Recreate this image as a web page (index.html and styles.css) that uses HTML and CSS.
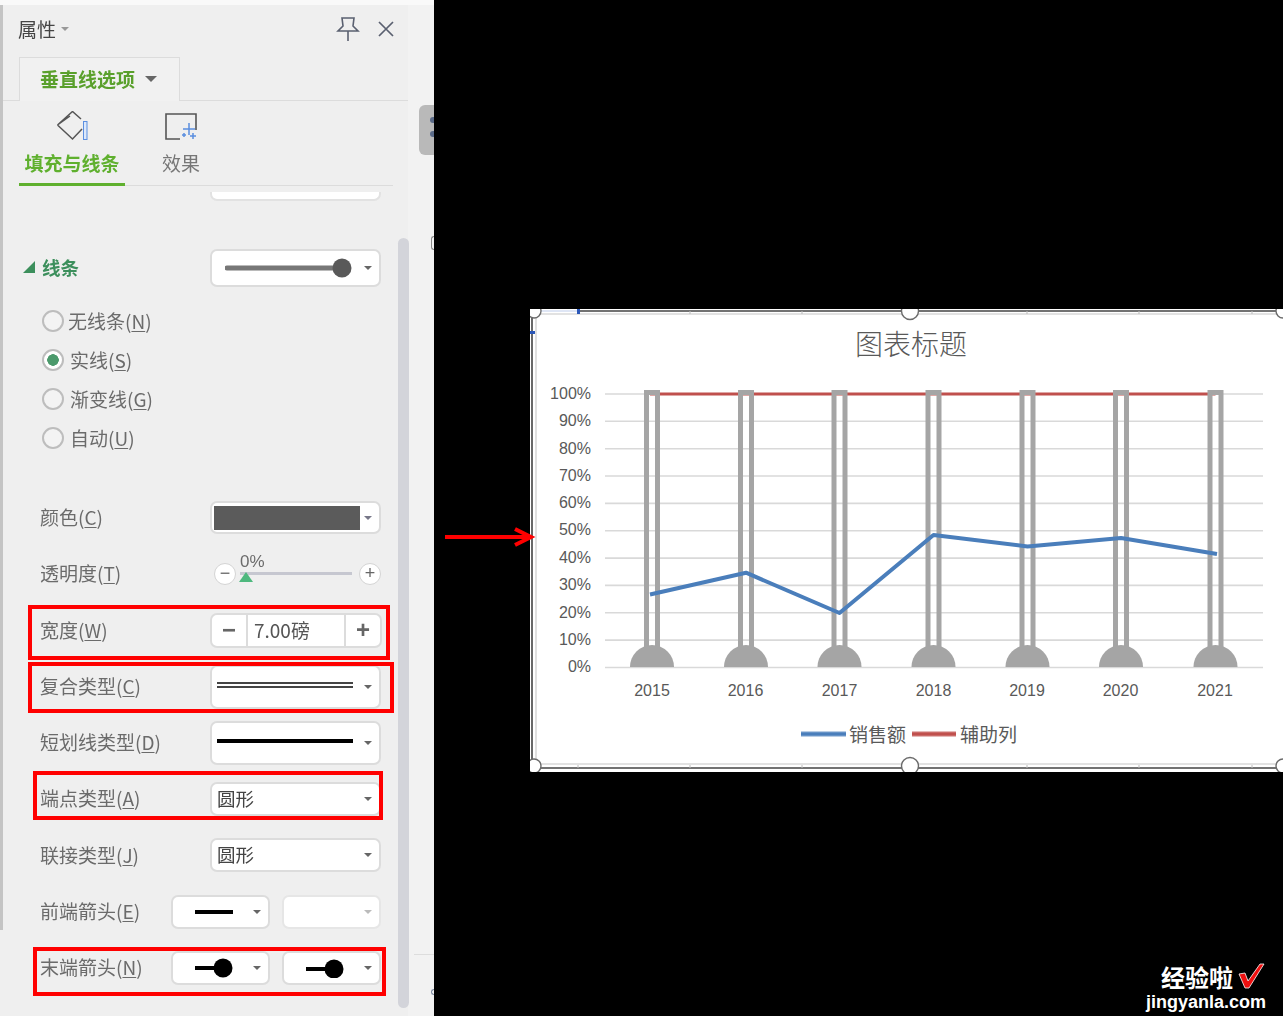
FILE: index.html
```html
<!doctype html>
<html lang="zh-CN">
<head>
  <title>属性 - 垂直线选项</title>
  <meta charset="utf-8">
  <link rel="stylesheet" href="styles.css">
</head>
<body>

<aside class="panel">
  <div class="panel-inner">
    <div class="topband"></div>

    <div class="panel-head">
      <span class="panel-title">属性</span>
      <i class="caret caret-title"></i>
      <svg class="pin" width="24" height="26" viewBox="0 0 24 26"><path d="M6 2h12l-1 8 5 5H2l5-5zM12 15v10" fill="none" stroke="#5a6070" stroke-width="1.6"/></svg>
      <svg class="close" width="18" height="18" viewBox="0 0 18 18"><path d="M2 2l14 14M16 2L2 16" fill="none" stroke="#5a6070" stroke-width="1.7"/></svg>
    </div>

    <div class="tabbar">
      <div class="tab">垂直线选项<i class="caret caret-tab"></i></div>
    </div>

    <div class="subtabs">
      <div class="subtab active">
        <svg width="32" height="32" viewBox="0 0 32 32"><path d="M1.5 14L16.5.5 25 8M1.5 14l15 14 9.500-10M1.500 14L14 5" fill="none" stroke="#555" stroke-width="1.5"/><rect x="27.500" y="10.500" width="3.500" height="18" fill="#dce8fa" stroke="#5b8fe0"/></svg>
        <span>填充与线条</span>
      </div>
      <div class="subtab">
        <svg width="34" height="30" viewBox="0 0 34 30"><path d="M16 27H2V2h30v16" fill="none" stroke="#555" stroke-width="1.6"/><path d="M25 11v12M19 17h12M29 21v6M26 24h6M20 21v4M18 23h4" fill="none" stroke="#5b8fe0" stroke-width="1.5"/></svg>
        <span>效果</span>
      </div>
    </div>

    <div class="fragment"></div>

    <div class="row row-section">
      <h3 class="section-title"><i class="tri"></i>线条</h3>
      <div class="ctrl">
        <svg class="preview" width="130" height="20" viewBox="0 0 130 20"><path d="M2 10h112" stroke="#777" stroke-width="5" stroke-linecap="round"/><circle cx="117" cy="10" r="9.500" fill="#595959"/></svg>
        <i class="caret"></i>
      </div>
    </div>

    <ul class="radios">
      <li><i class="radio"></i><span class="radio-first">无线条(<u>N</u>)</span></li>
      <li><i class="radio on"></i><span>实线(<u>S</u>)</span></li>
      <li><i class="radio"></i><span>渐变线(<u>G</u>)</span></li>
      <li><i class="radio"></i><span>自动(<u>U</u>)</span></li>
    </ul>

    <div class="row">
      <label>颜色(<u>C</u>)</label>
      <div class="ctrl ctrl-color"><div class="swatch"></div><i class="caret"></i></div>
    </div>

    <div class="row">
      <label>透明度(<u>T</u>)</label>
      <div class="slider">
        <i class="round">−</i>
        <div class="track"><span class="pct">0%</span><i class="thumb"></i></div>
        <i class="round">+</i>
      </div>
    </div>

    <div class="row row-tall">
      <label>宽度(<u>W</u>)</label>
      <div class="ctrl spinner">
        <b class="step">−</b>
        <span class="value">7.00磅</span>
        <b class="step">+</b>
      </div>
    </div>

    <div class="row">
      <label>复合类型(<u>C</u>)</label>
      <div class="ctrl ctrl-big">
        <div class="compound"></div>
        <i class="caret"></i>
      </div>
    </div>

    <div class="row">
      <label>短划线类型(<u>D</u>)</label>
      <div class="ctrl ctrl-big">
        <div class="dash"></div>
        <i class="caret"></i>
      </div>
    </div>

    <div class="row">
      <label>端点类型(<u>A</u>)</label>
      <div class="ctrl"><span class="value-text">圆形</span><i class="caret"></i></div>
    </div>

    <div class="row row-tall">
      <label>联接类型(<u>J</u>)</label>
      <div class="ctrl"><span class="value-text">圆形</span><i class="caret"></i></div>
    </div>

    <div class="row">
      <label class="label-short">前端箭头(<u>E</u>)</label>
      <div class="ctrl ctrl-half">
        <svg width="40" height="20" viewBox="0 0 40 20"><path d="M0 10h38" stroke="#000" stroke-width="4"/></svg>
        <i class="caret"></i>
      </div>
      <div class="ctrl ctrl-half ctrl-off"><i class="caret"></i></div>
    </div>

    <div class="row">
      <label class="label-short">末端箭头(<u>N</u>)</label>
      <div class="ctrl ctrl-half">
        <svg width="40" height="20" viewBox="0 0 40 20"><path d="M0 10h24" stroke="#000" stroke-width="4"/><circle cx="28" cy="10" r="9.500"/></svg>
        <i class="caret"></i>
      </div>
      <div class="ctrl ctrl-half">
        <svg width="40" height="20" viewBox="0 0 40 20"><path d="M0 11h24" stroke="#000" stroke-width="4"/><circle cx="28" cy="11" r="9.500"/></svg>
        <i class="caret"></i>
      </div>
    </div>

    <div class="scrollbar"></div>
    <div class="gutter-tab"><i></i><i></i></div>
    <div class="gutter-line"></div>
    <div class="gutter-dot"></div>
    <div class="gutter-dot gutter-dot-low"></div>
  </div>

  <div class="mark mark-width"></div>
  <div class="mark mark-compound"></div>
  <div class="mark mark-cap"></div>
  <div class="mark mark-tail"></div>
</aside>

<main class="stage">
  <svg class="arrow" width="96" height="40" viewBox="0 0 96 40">
    <path d="M11 20h85M81 12l16 8-16 8" fill="none" stroke="#f00" stroke-width="4"/>
  </svg>

  <svg class="chart" width="753" height="463" viewBox="530 309 753 463">
    <rect x="530" y="309" width="753" height="463" fill="#fff"/>

    <!-- selection frame and the sheet cells showing through it -->
    <path class="frame" d="M532 311H1283M532 311V768M532 768H1283"/>
    <path class="frame-inner" d="M536 314H1283M536 314V764M536 764H1283"/>
    <path class="cell" d="M690 311v3M802 311v3M1027 311v3M1139 311v3M1252 311v3M578 768v-3M690 768v-3M802 768v-3M1027 768v-3M1139 768v-3M1252 768v-3"/>
    <rect x="540" y="310" width="38" height="2" fill="#dfe6f5"/>
    <rect x="577" y="309" width="3" height="5" fill="#2b57b8"/>
    <rect x="530" y="331" width="5" height="3" fill="#2b57b8"/>

    <text class="title" x="911" y="355" text-anchor="middle">图表标题</text>

    <g class="grid">
      <path d="M605 394H1263M605 421.3H1263M605 448.7H1263M605 476H1263M605 503.4H1263M605 530.7H1263M605 558.1H1263M605 585.4H1263M605 612.8H1263M605 640.1H1263M605 667.5H1263"/>
    </g>

    <g class="axis" text-anchor="end">
      <text x="591" y="399">100%</text>
      <text x="591" y="426">90%</text>
      <text x="591" y="454">80%</text>
      <text x="591" y="481">70%</text>
      <text x="591" y="508">60%</text>
      <text x="591" y="535">50%</text>
      <text x="591" y="563">40%</text>
      <text x="591" y="590">30%</text>
      <text x="591" y="618">20%</text>
      <text x="591" y="645">10%</text>
      <text x="591" y="672">0%</text>
    </g>

    <path class="red" d="M650 394H1215.5"/>

    <g class="bars">
      <path d="M646.5 667V392.5H657.5V667M740.5 667V392.5H751.5V667M834 667V392.5H845V667M928 667V392.5H939V667M1022 667V392.5H1033V667M1115.5 667V392.5H1126.5V667M1210 667V392.5H1221V667"/>
    </g>
    <g class="domes">
      <path d="M630 667a22 22 0 0 1 44 0z"/>
      <path d="M724 667a22 22 0 0 1 44 0z"/>
      <path d="M817.5 667a22 22 0 0 1 44 0z"/>
      <path d="M911.5 667a22 22 0 0 1 44 0z"/>
      <path d="M1005.5 667a22 22 0 0 1 44 0z"/>
      <path d="M1099 667a22 22 0 0 1 44 0z"/>
      <path d="M1193.5 667a22 22 0 0 1 44 0z"/>
    </g>

    <path class="blue" d="M650 594.5L746 572.7L839.5 613L933.5 535L1027.5 546.5L1121 538L1217 554"/>

    <g class="axis" text-anchor="middle">
      <text x="652" y="696">2015</text>
      <text x="745.5" y="696">2016</text>
      <text x="839.5" y="696">2017</text>
      <text x="933.5" y="696">2018</text>
      <text x="1027" y="696">2019</text>
      <text x="1120.5" y="696">2020</text>
      <text x="1215" y="696">2021</text>
    </g>

    <path class="legend-glow-blue" d="M801 734H846"/>
    <path class="legend-blue" d="M801 734H846"/>
    <text class="legend" x="849" y="742">销售额</text>
    <path class="legend-glow-red" d="M912 734H956"/>
    <path class="legend-red" d="M912 734H956"/>
    <text class="legend" x="960" y="742">辅助列</text>

    <g class="handles">
      <circle cx="534" cy="311" r="7"/>
      <circle cx="910" cy="311" r="8.5"/>
      <circle cx="1283" cy="311" r="7"/>
      <circle cx="534" cy="766" r="7"/>
      <circle cx="910" cy="766" r="8.5"/>
      <circle cx="1283" cy="766" r="7"/>
    </g>
  </svg>
</main>

<div class="watermark">
  <div class="wm-top">经验啦<svg width="28" height="28" viewBox="0 0 28 28"><path d="M2 12l6-1 3 8L23 2h4L12 26H8z" fill="#f01010" stroke="#fff" stroke-width=".8"/></svg></div>
  <div class="wm-url">jingyanla.com</div>
</div>

</body>
</html>
```

FILE: styles.css
```css
:root {
  --panel: #efefef;
  --label: #6b6b6b;
  --green: #5fb02e;
  --line: #dcdcdc;
  --grey-bar: #a5a5a5;
  --cjk: "Noto Sans CJK SC", "Liberation Sans", sans-serif;
}
* {
  box-sizing: border-box;
}
html,
body {
  height: 1016px;
}
body {
  margin: 0;
  display: flex;
  overflow: hidden;
  position: relative;
  background: #000;
  font-family: var(--cjk);
}

/* left property panel */
.panel {
  position: relative;
  flex: none;
  width: 434px;
  height: 1016px;
  background: #f2f2f2;
}
.panel-inner {
  height: 100%;
  width: 408px;
  background: var(--panel);
  filter: blur(.35px);
  font-size: 19px;
  color: var(--label);
}
.panel-inner::before {
  content: "";
  position: absolute;
  left: 0;
  top: 5px;
  width: 3px;
  height: 925px;
  background: #c4c4c4;
}
.topband {
  width: 434px;
  height: 5px;
  background: #f9f9f9;
}
.panel-head {
  display: flex;
  align-items: center;
  height: 48px;
  padding-left: 18px;
}
.panel-title {
  margin-bottom: 2px;
  color: #444;
}
.pin {
  margin-left: 267px;
}
.close {
  margin-left: 17px;
}

.caret {
  flex: none;
  width: 0;
  height: 0;
  border-left: 4.5px solid transparent;
  border-right: 4.5px solid transparent;
  border-top: 4.5px solid #666;
}
.caret-title {
  margin-left: 5px;
  border-top-color: #999;
}
.caret-tab {
  margin-left: 10px;
  border-left-width: 6.5px;
  border-right-width: 6.5px;
  border-top-width: 6.5px;
}

.tabbar {
  height: 44px;
  margin-top: 4px;
  padding-left: 19px;
  border-bottom: 1px solid var(--line);
}
.tab {
  display: flex;
  align-items: center;
  width: 161px;
  height: 44px;
  padding: 0 0 2px 20px;
  background: #f1f1f1;
  border: 1px solid var(--line);
  border-bottom: 0;
  font-size: 19px;
  font-weight: 700;
  color: #5aa02c;
}

.subtabs {
  display: flex;
  width: 374px;
  height: 85px;
  margin-left: 19px;
  border-bottom: 1px solid var(--line);
}
.subtab {
  display: flex;
  flex-direction: column;
  align-items: center;
  width: 112px;
  height: 85px;
  padding-top: 10px;
  color: #777;
}
.subtab svg {
  flex: none;
  height: 32px;
}
.subtab span {
  margin-top: 7px;
  line-height: 26px;
  font-size: 19px;
}
.subtab.active {
  width: 106px;
  border-bottom: 3px solid var(--green);
  color: var(--green);
  font-weight: 700;
}

.fragment {
  width: 171px;
  height: 9px;
  margin: 6px 0 39px 210px;
  background: #fff;
  border: 2px solid #e2e2e2;
  border-top: 0;
  border-radius: 0 0 7px 7px;
}

/* form rows */
.row {
  display: flex;
  align-items: center;
  height: 56px;
  padding-left: 40px;
}
.row-tall {
  height: 57px;
}
.row label {
  flex: none;
  width: 170px;
  margin-bottom: 2px;
}
.row label.label-short {
  width: 131px;
}
u {
  text-underline-offset: 2px;
  text-decoration-thickness: 1px;
}
.row-section {
  padding-left: 23px;
}
.section-title {
  display: flex;
  align-items: center;
  flex: none;
  width: 187px;
  margin: 0 0 2px;
  font-size: 18.5px;
  font-weight: 700;
  color: #3c8f5c;
}
.tri {
  width: 0;
  height: 0;
  margin-right: 7px;
  border-left: 12px solid transparent;
  border-bottom: 12px solid #3c8f5c;
}

.ctrl {
  display: flex;
  align-items: center;
  justify-content: space-between;
  flex: none;
  width: 171px;
  height: 38px;
  padding: 0 7px 0 5px;
  background: #fff;
  border: 2px solid var(--line);
  border-radius: 7px;
  color: #555;
}
.ctrl-color {
  height: 33px;
  padding-left: 2px;
}
.swatch {
  width: 146px;
  height: 24px;
  background: #5b5b5b;
}
.ctrl-color .caret {
  border-top-color: #778;
}
.ctrl-big {
  height: 44px;
}
.preview {
  margin-left: 8px;
}
.compound {
  width: 136px;
  height: 6px;
  margin-bottom: 4px;
  border-top: 2px solid #444;
  border-bottom: 2px solid #444;
}
.dash {
  width: 136px;
  height: 4px;
  margin-bottom: 4px;
  background: #000;
}
.value-text {
  margin-bottom: 2px;
  font-size: 18.5px;
  color: #444;
}
.row .ctrl:has(.value-text) {
  height: 34px;
}
.ctrl-half {
  width: 99px;
  height: 34px;
  padding-left: 22px;
}
.ctrl-half + .ctrl-half {
  margin-left: 12px;
}
.ctrl-off {
  justify-content: flex-end;
  border-color: #e6e6e6;
}
.ctrl-off .caret {
  border-top-color: #bbb;
}

.spinner {
  width: 172px;
  height: 35px;
  padding: 0;
}
.step {
  flex: none;
  width: 34px;
  height: 100%;
  text-align: center;
  line-height: 29px;
  font-size: 24px;
  font-family: "Liberation Sans", sans-serif;
  color: #666;
}
.spinner .value {
  flex: 1;
  height: 100%;
  padding-left: 6px;
  line-height: 29px;
  border-left: 2px solid var(--line);
  border-right: 2px solid var(--line);
}

.slider {
  display: flex;
  align-items: center;
  width: 167px;
  margin-left: 4px;
}
.round {
  flex: none;
  width: 22px;
  height: 22px;
  background: #fff;
  border: 1.5px solid #d4d4d4;
  border-radius: 50%;
  text-align: center;
  font-style: normal;
  line-height: 18px;
  font-size: 18px;
  font-family: "Liberation Sans", sans-serif;
  color: #666;
}
.track {
  position: relative;
  flex: 1;
  height: 3px;
  margin: 0 7px 0 4px;
  background: #c6c7d0;
}
.pct {
  position: absolute;
  left: 0;
  top: -21px;
  line-height: 22px;
  font-family: "Liberation Sans", sans-serif;
  font-size: 17px;
}
.thumb {
  position: absolute;
  left: -1px;
  top: 0;
  width: 0;
  height: 0;
  border-left: 7px solid transparent;
  border-right: 7px solid transparent;
  border-bottom: 10px solid #4eb87e;
}

.radios {
  margin: 5.5px 0 32px;
  padding: 0 0 0 42px;
  list-style: none;
}
.radios li {
  display: flex;
  align-items: center;
  height: 39px;
}
.radios span {
  margin: 0 0 2px 6px;
}
.radios .radio-first {
  margin-left: 4px;
}
.radio {
  flex: none;
  width: 22px;
  height: 22px;
  border: 2px solid #bdbdbd;
  border-radius: 50%;
  background: #f3f3f3;
}
.radio.on {
  background: radial-gradient(circle, #4c9a6c 0 5.5px, #fff 6px);
}

.scrollbar {
  position: absolute;
  left: 398px;
  top: 238px;
  width: 11px;
  height: 770px;
  background: #d3d4da;
  border-radius: 6px;
}
.gutter-tab {
  position: absolute;
  left: 419px;
  top: 105px;
  width: 15px;
  height: 50px;
  padding: 12px 0 0 11px;
  background: #b9b9b9;
  border-radius: 6px 0 0 6px;
}
.gutter-tab i {
  display: block;
  width: 4px;
  height: 6px;
  margin-bottom: 8px;
  background: #5a6a88;
  border-radius: 3px 0 0 3px;
}
.gutter-line {
  position: absolute;
  left: 414px;
  top: 954px;
  width: 20px;
  height: 1px;
  background: #ddd;
}
.gutter-dot {
  position: absolute;
  left: 431px;
  top: 236px;
  width: 3px;
  height: 14px;
  border: 1.5px solid #888;
  border-right: 0;
  border-radius: 3px 0 0 3px;
}
.gutter-dot-low {
  top: 989px;
  height: 6px;
  border-color: #7d8aa0;
}

/* red marker boxes laid over the panel */
.mark {
  position: absolute;
  border: 4px solid #f00;
}
.mark-width {
  left: 28px;
  top: 605px;
  width: 362px;
  height: 55px;
}
.mark-compound {
  left: 28px;
  top: 662px;
  width: 366px;
  height: 51px;
}
.mark-cap {
  left: 33px;
  top: 771px;
  width: 350px;
  height: 49px;
}
.mark-tail {
  left: 33px;
  top: 947px;
  width: 353px;
  height: 49px;
}

/* chart side */
.stage {
  display: flex;
  align-items: flex-start;
  flex: 1;
  padding-top: 309px;
}
.arrow {
  position: relative;
  z-index: 1;
  flex: none;
  margin-top: 208px;
  overflow: visible;
}
.chart {
  display: block;
  flex: none;
}
.chart path {
  fill: none;
}
.frame {
  stroke: #444;
  stroke-width: 1.6;
}
.frame-inner {
  stroke: #d9d9d9;
  stroke-width: 1.6;
}
.cell {
  stroke: #bbb;
}
.title {
  font-family: var(--cjk);
  font-size: 28px;
  font-weight: 300;
  fill: #595959;
}
.grid path {
  stroke: #d9d9d9;
  stroke-width: 1.6;
}
.axis text {
  font-family: "Liberation Sans", sans-serif;
  font-size: 16px;
  fill: #595959;
}
.red {
  stroke: #c0504d;
  stroke-width: 3;
}
.bars path {
  stroke: var(--grey-bar);
  stroke-width: 5;
}
.chart .domes path {
  fill: var(--grey-bar);
}
.blue {
  stroke: #4a7ebb;
  stroke-width: 4;
  stroke-linejoin: round;
}
.legend {
  font-family: var(--cjk);
  font-size: 19px;
  fill: #595959;
}
.legend-blue {
  stroke: #4a7ebb;
  stroke-width: 3.5;
}
.legend-glow-blue {
  stroke: #b9cde5;
  stroke-width: 6;
}
.legend-red {
  stroke: #c0504d;
  stroke-width: 3.5;
}
.legend-glow-red {
  stroke: #e6b9b8;
  stroke-width: 6;
}
.handles circle {
  fill: #fff;
  stroke: #6b6b6b;
  stroke-width: 1.4;
}

/* site watermark */
.watermark {
  position: absolute;
  left: 1146px;
  top: 962px;
  color: #fff;
  font-weight: 700;
}
.wm-top {
  display: flex;
  align-items: center;
  height: 30px;
  padding-left: 15px;
  font-size: 24px;
  line-height: 30px;
}
.wm-top svg {
  flex: none;
  margin: 0 0 2px 4px;
}
.wm-url {
  height: 20px;
  font-family: "Liberation Sans", sans-serif;
  font-size: 18px;
  line-height: 20px;
}
```
